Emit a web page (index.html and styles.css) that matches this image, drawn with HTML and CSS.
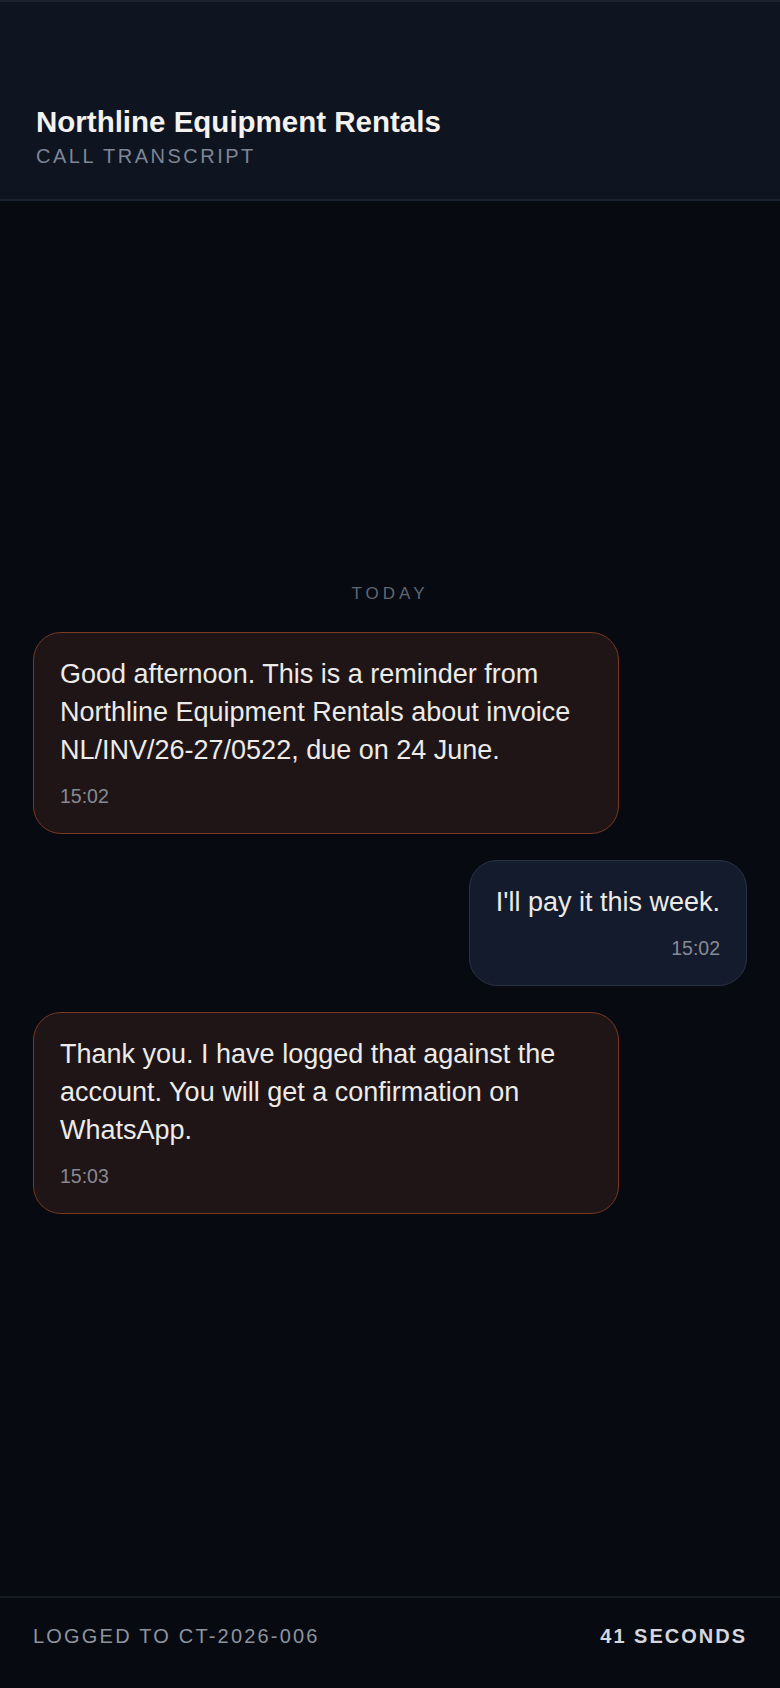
FILE: index.html
```html
<!DOCTYPE html>
<html lang="en">
<head>
<meta charset="utf-8">
<title>Northline Equipment Rentals — Call Transcript</title>
<link rel="stylesheet" href="styles.css">
</head>
<body>
<div class="app">
  <header class="header">
    <h1 class="title">Northline Equipment Rentals</h1>
    <div class="subtitle">CALL TRANSCRIPT</div>
  </header>
  <main class="chat">
    <div class="day">TODAY</div>
    <div class="msg agent">
      <p class="text">Good afternoon. This is a reminder from Northline Equipment Rentals about invoice NL/INV/26-27/0522, due on 24 June.</p>
      <div class="time">15:02</div>
    </div>
    <div class="msg user">
      <p class="text">I'll pay it this week.</p>
      <div class="time">15:02</div>
    </div>
    <div class="msg agent">
      <p class="text">Thank you. I have logged that against the account. You will get a confirmation on WhatsApp.</p>
      <div class="time">15:03</div>
    </div>
  </main>
  <footer class="footer">
    <span class="logged">LOGGED TO CT-2026-006</span>
    <span class="duration">41 SECONDS</span>
  </footer>
</div>
</body>
</html>
```
FILE: styles.css
```css
* { box-sizing: border-box; }
html, body { margin: 0; padding: 0; }
body {
  background: #070a11;
  font-family: "Liberation Sans", Arial, Helvetica, sans-serif;
  color: #ecebe8;
}
.app {
  display: flex;
  flex-direction: column;
  height: 1688px;
}
.header {
  background: #0e1420;
  border-top: 2px solid #1c2230;
  border-bottom: 2px solid #1c2330;
  padding: 103px 36px 31px;
}
.title {
  margin: 0;
  font-size: 29.5px;
  line-height: 34px;
  font-weight: 700;
  color: #f3f2ee;
}
.subtitle {
  margin-top: 5px;
  font-size: 20px;
  line-height: 24px;
  letter-spacing: 2.5px;
  color: #7d8696;
}
.chat {
  flex: 1;
  display: flex;
  flex-direction: column;
  justify-content: center;
  padding: 0 33px;
  gap: 26px;
}
.day {
  text-align: center;
  font-size: 17px;
  line-height: 20px;
  letter-spacing: 4px;
  color: #5f6673;
  margin-bottom: 2px;
}
.msg {
  max-width: 586px;
  border-radius: 28px;
  padding: 22px 26px 25px;
}
.msg.agent {
  align-self: flex-start;
  width: 586px;
  background: #1f1516;
  border: 1.5px solid #7a3822;
}
.msg.user {
  align-self: flex-end;
  background: #141b2c;
  border: 1.5px solid #2b3346;
  text-align: right;
}
.text {
  margin: 0;
  font-size: 27px;
  line-height: 38px;
  color: #ecebe8;
}
.time {
  margin-top: 16px;
  font-size: 19.5px;
  line-height: 23px;
  color: #868a94;
}
.footer {
  display: flex;
  justify-content: space-between;
  align-items: center;
  border-top: 2px solid #161b25;
  padding: 26px 33px 40px;
  background: #070a11;
}
.logged {
  font-size: 20px;
  line-height: 24px;
  letter-spacing: 2.2px;
  color: #8e949e;
}
.duration {
  font-size: 20px;
  line-height: 24px;
  letter-spacing: 2px;
  font-weight: 700;
  color: #d5d7dc;
}
```
